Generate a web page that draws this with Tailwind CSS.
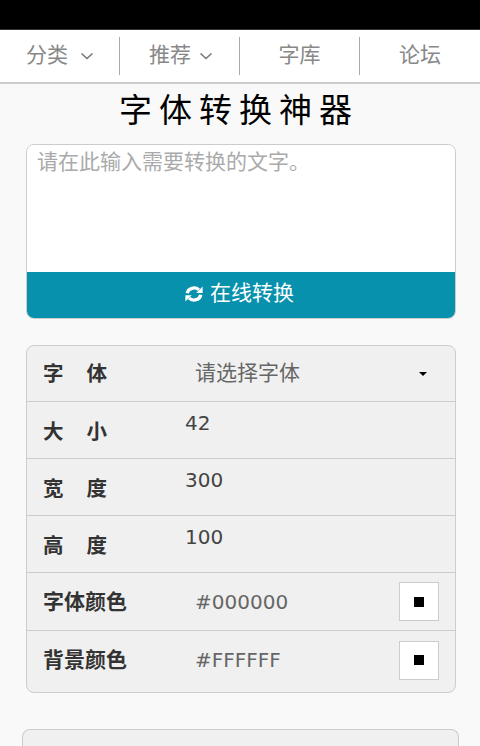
<!DOCTYPE html>
<html lang="zh-CN">
  <head>
    <meta charset="UTF-8" />
    <meta name="viewport" content="width=device-width, initial-scale=1.0" />
    <script src="https://cdn.jsdelivr.net/npm/@tailwindcss/browser@4"></script>
    <title>字体转换神器</title>
  </head>
  <body class="h-[746px] overflow-hidden bg-[#f9f9f9] font-['DejaVu_Sans','Noto_Sans_CJK_SC',sans-serif]">
    <!-- status bar -->
    <div class="h-[30px] border-b border-[#333] bg-black"></div>

    <!-- nav -->
    <nav class="flex h-[54px] items-center border-b-2 border-[#ccc] bg-white text-[21px] text-[#888]">
      <a class="flex h-[38px] w-[120px] items-center border-r border-[#aaa] pl-[26px]">
        分类
        <svg class="ml-[12px] h-[8px] w-[14px]" viewBox="0 0 14 8" fill="none" stroke="#777" stroke-width="1.6"><path d="M1.5 1.5 7 6.500l5.500-5" /></svg>
      </a>
      <a class="flex h-[38px] w-[120px] items-center border-r border-[#aaa] pl-[29px]">
        推荐
        <svg class="ml-[8px] h-[8px] w-[14px]" viewBox="0 0 14 8" fill="none" stroke="#777" stroke-width="1.6"><path d="M1.5 1.5 7 6.500l5.500-5" /></svg>
      </a>
      <a class="flex h-[38px] w-[120px] items-center justify-center border-r border-[#aaa]">字库</a>
      <a class="flex h-[38px] w-[120px] items-center justify-center">论坛</a>
    </nav>

    <h1 class="h-[60px] pr-[2px] text-center text-[33px] leading-[48px] tracking-[7px] text-black font-['Noto_Sans_CJK_SC',serif]">字体转换神器</h1>

    <div class="pl-[26px] pr-[24px]">
      <!-- input + button -->
      <div class="overflow-hidden rounded-[8px] border border-[#ccc]">
        <div class="h-[127px] bg-white pl-[10px] pt-[3px] text-[21px] leading-[28px] text-[#aaa]">请在此输入需要转换的文字。</div>
        <button class="flex h-[46px] w-full items-center justify-center gap-[7px] bg-[#0891ad] pb-[2px] pr-[3px] text-[21px] text-white">
          <svg class="h-[18px] w-[18px]" viewBox="0 0 24 24" fill="none" stroke="#fff" stroke-width="4.500">
            <path d="M3 11a9 8 0 0 1 15.500-4.500" />
            <path d="M21 13a9 8 0 0 1-15.500 4.500" />
            <path d="M23.500 2v8.500H15z" fill="#fff" stroke="none" />
            <path d="M.5 22v-8.500H9z" fill="#fff" stroke="none" />
          </svg>
          在线转换
        </button>
      </div>

      <!-- settings -->
      <div class="mt-[26px] h-[348px] rounded-[8px] border border-[#ccc] bg-[#f0f0f0] text-[#333]">
        <div class="flex h-[56px] items-center border-b border-[#ccc] pl-[16px] pr-[28px]">
          <span class="flex w-[64px] justify-between pt-[2px] text-[20.5px] font-bold"><span>字</span><span>体</span></span>
          <span class="ml-[88px] flex-1 text-[21px] text-[#666]">请选择字体</span>
          <span class="h-0 w-0 border-x-[4px] border-t-[4px] border-x-transparent border-t-black"></span>
        </div>
        <div class="flex h-[57px] border-b border-[#ccc] pl-[16px]">
          <span class="mt-[15px] flex h-[26px] w-[64px] justify-between text-[20.5px] font-bold"><span>大</span><span>小</span></span>
          <span class="ml-[78px] mt-[9px] text-[20px] leading-[24px] text-[#444]">42</span>
        </div>
        <div class="flex h-[57px] border-b border-[#ccc] pl-[16px]">
          <span class="mt-[15px] flex h-[26px] w-[64px] justify-between text-[20.5px] font-bold"><span>宽</span><span>度</span></span>
          <span class="ml-[78px] mt-[9px] text-[20px] leading-[24px] text-[#444]">300</span>
        </div>
        <div class="flex h-[57px] border-b border-[#ccc] pl-[16px]">
          <span class="mt-[15px] flex h-[26px] w-[64px] justify-between text-[20.5px] font-bold"><span>高</span><span>度</span></span>
          <span class="ml-[78px] mt-[9px] text-[20px] leading-[24px] text-[#444]">100</span>
        </div>
        <div class="flex h-[58px] items-center border-b border-[#ccc] px-[16px]">
          <span class="w-[152px] pt-[3px] text-[21px] font-bold">字体颜色</span>
          <span class="flex-1 text-[20px] text-[#666]">#000000</span>
          <span class="flex h-[39px] w-[40px] items-center justify-center border border-[#ccc] bg-white"><span class="h-[10px] w-[10px] bg-black"></span></span>
        </div>
        <div class="flex h-[58px] items-center px-[16px]">
          <span class="w-[152px] pt-[1px] text-[21px] font-bold">背景颜色</span>
          <span class="flex-1 text-[20px] text-[#666]">#FFFFFF</span>
          <span class="flex h-[39px] w-[40px] items-center justify-center border border-[#ccc] bg-white"><span class="h-[10px] w-[10px] bg-black"></span></span>
        </div>
      </div>
    </div>

    <!-- next panel, cut off by the fold -->
    <div class="ml-[22px] mr-[21px] mt-[36px] h-[17px] rounded-t-[8px] border border-b-0 border-[#ccc] bg-[#f0f0f0]"></div>
  </body>
</html>
